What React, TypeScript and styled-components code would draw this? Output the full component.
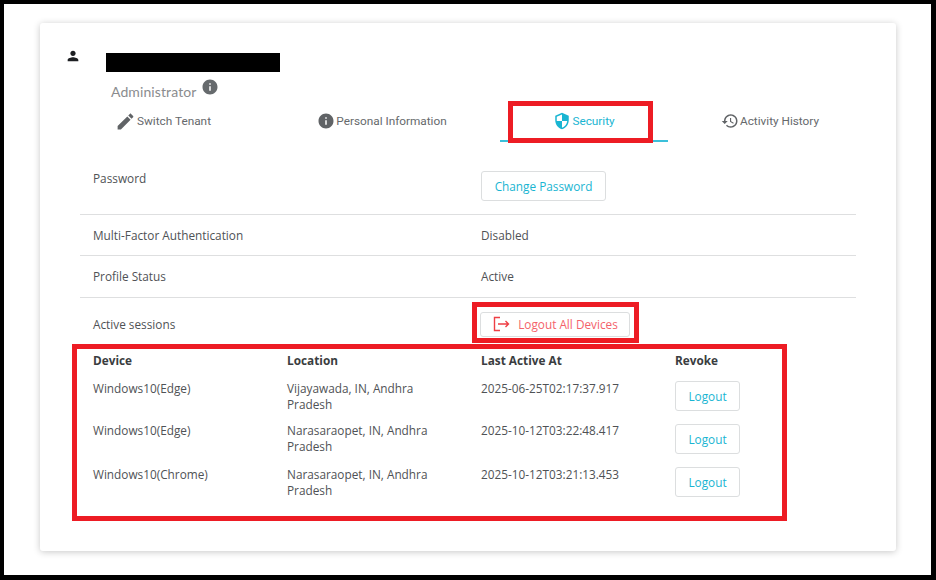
import React from "react";
import styled, { createGlobalStyle } from "styled-components";

const Global = createGlobalStyle`
  html, body { margin: 0; padding: 0; background: #fff; }
  body { font-family: "Open Sans", "Liberation Sans", sans-serif; color: #4f5255; }
  * { box-sizing: border-box; }
`;

const Frame = styled.div`
  width: 936px;
  height: 580px;
  border-style: solid;
  border-color: #000;
  border-width: 4px 5px 5px 4px;
  padding: 19px 35px 24px 36px;
  background: #fff;
  overflow: hidden;
`;

const Card = styled.section`
  height: 528px;
  background: #fff;
  border-radius: 3px;
  box-shadow: 0 1px 7px rgba(0, 0, 0, 0.22);
  padding: 0 24px 0 26px;
`;

const Header = styled.header`
  height: 85px;
  display: flex;
  padding-top: 24px;
`;

const UserGlyph = styled.svg`
  width: 16px;
  height: 16px;
  margin-top: 1px;
  margin-left: -1px;
  fill: #1d1f22;
  flex: none;
`;

const Identity = styled.div`
  margin-left: 25px;
  display: flex;
  flex-direction: column;
`;

const Redaction = styled.div`
  width: 174px;
  height: 19px;
  margin-top: 6px;
  background: #000;
`;

const Role = styled.div`
  display: flex;
  margin: 11px 0 0 5px;
  font-family: Lato, "Open Sans", sans-serif;
  font-size: 14px;
  line-height: 18px;
  letter-spacing: 0.1px;
  color: #8a8c8e;
  position: relative;
`;

const RoleInfo = styled.svg`
  position: absolute;
  left: 90px;
  top: -5px;
  width: 18px;
  height: 18px;
  fill: #666a6d;
`;

const Tabs = styled.nav`
  display: flex;
  height: 34px;
`;

const Tab = styled.div<{ $width: number; $active?: boolean; $inset?: number }>`
  position: relative;
  width: ${(p) => p.$width}px;
  height: 34px;
  display: flex;
  justify-content: center;
  align-items: flex-start;
  gap: 1px;
  padding: 4px 0 0 ${(p) => p.$inset ?? 0}px;
  font-family: Roboto, "Liberation Sans", sans-serif;
  font-size: 11.8px;
  line-height: 18px;
  color: ${(p) => (p.$active ? "#19b5d2" : "#66696c")};
  border-bottom: 2px solid ${(p) => (p.$active ? "#3cc0da" : "transparent")};
`;

const TabGlyph = styled.svg<{ $active?: boolean; $large?: boolean }>`
  width: ${(p) => (p.$large ? 21 : 18)}px;
  height: ${(p) => (p.$large ? 21 : 18)}px;
  margin-top: ${(p) => (p.$large ? -1.5 : 0)}px;
  flex: none;
  fill: ${(p) => (p.$active ? "#19b5d2" : "#606366")};
`;

const Highlight = styled.span<{ $top: number; $right: number; $bottom: number; $left: number }>`
  position: absolute;
  top: ${(p) => p.$top}px;
  right: ${(p) => p.$right}px;
  bottom: ${(p) => p.$bottom}px;
  left: ${(p) => p.$left}px;
  border: 5px solid #ed1c24;
  pointer-events: none;
`;

const Rows = styled.div`
  margin: 15px 16px 0 14px;
  font-size: 11.8px;
  line-height: 16px;
`;

const Row = styled.div<{ $height: number; $top: number; $last?: boolean }>`
  display: grid;
  grid-template-columns: repeat(2, 388px);
  height: ${(p) => p.$height}px;
  padding-top: ${(p) => p.$top}px;
  border-bottom: ${(p) => (p.$last ? "none" : "1px solid #dedfe0")};
`;

const Cell = styled.div`
  padding-left: 13px;
`;

const ActionCell = styled.div<{ $offset: number }>`
  padding-left: 13px;
  margin-top: ${(p) => p.$offset}px;
`;

const OutlineButton = styled.button<{ $danger?: boolean }>`
  position: relative;
  display: inline-flex;
  align-items: center;
  justify-content: center;
  background: #fff;
  border: 1px solid #dcdedf;
  border-radius: 3px;
  font-family: "Open Sans", "Liberation Sans", sans-serif;
  font-size: 11.8px;
  line-height: 16px;
  padding: 0 0 1px;
  color: ${(p) => (p.$danger ? "#f4626a" : "#19b5d2")};
`;

const ChangeButton = styled(OutlineButton)`
  width: 125px;
  height: 30px;
`;

const LogoutAllButton = styled(OutlineButton)`
  width: 150px;
  height: 25px;
  margin-left: -1px;
  gap: 8px;
`;

const LogoutGlyph = styled.svg`
  width: 18px;
  height: 18px;
  fill: none;
  stroke: #ee3f45;
  stroke-width: 1.4;
`;

const SessionsWrap = styled.div`
  position: relative;
  margin: 3px 16px 0 14px;
  font-size: 11.8px;
  line-height: 16px;
`;

const SessionsGrid = styled.div`
  display: grid;
  grid-template-columns: repeat(4, 194px);
`;

const HeadCell = styled.div`
  padding: 0 0 0 13px;
  height: 21px;
  font-weight: 700;
  color: #3a3d40;
`;

const SessionCell = styled.div<{ $height: number }>`
  padding: 7px 13px 0;
  height: ${(p) => p.$height}px;
`;

const LogoutButtonCell = styled.div<{ $height: number; $top: number }>`
  padding: ${(p) => p.$top}px 0 0 13px;
  height: ${(p) => p.$height}px;
`;

const LogoutButton = styled(OutlineButton)`
  width: 65px;
  height: 30px;
`;

const person = "M12 12c2.21 0 4-1.79 4-4s-1.79-4-4-4-4 1.79-4 4 1.79 4 4 4zm0 2c-2.67 0-8 1.34-8 4v2h16v-2c0-2.66-5.33-4-8-4z";
const edit = "M3 17.25V21h3.75L17.81 9.94l-3.75-3.75L3 17.25zM20.71 7.04c.39-.39.39-1.02 0-1.41l-2.34-2.34c-.39-.39-1.02-.39-1.41 0l-1.83 1.83 3.75 3.75 1.83-1.83z";
const info = "M12 2C6.48 2 2 6.48 2 12s4.48 10 10 10 10-4.48 10-10S17.52 2 12 2zm1 15h-2v-6h2v6zm0-8h-2V7h2v2z";
const shield = "M12 1L3 5v6c0 5.55 3.84 10.74 9 12 5.16-1.26 9-6.45 9-12V5l-9-4zm0 10.99h7c-.53 4.12-3.28 7.79-7 8.94V12H5V6.3l7-3.11v8.8z";
const history = "M13 3c-4.97 0-9 4.03-9 9H1l3.89 3.89.07.14L9 12H6c0-3.87 3.13-7 7-7s7 3.13 7 7-3.13 7-7 7c-1.93 0-3.68-.79-4.94-2.06l-1.42 1.42C8.27 19.99 10.51 21 13 21c4.97 0 9-4.03 9-9s-4.03-9-9-9zm-1 5v5l4.28 2.54.72-1.21-3.5-2.08V8H12z";

const sessions = [
  { device: "Windows10(Edge)", location: "Vijayawada, IN, Andhra Pradesh", at: "2025-06-25T02:17:37.917", height: 42, buttonTop: 8 },
  { device: "Windows10(Edge)", location: "Narasaraopet, IN, Andhra Pradesh", at: "2025-10-12T03:22:48.417", height: 44, buttonTop: 9 },
  { device: "Windows10(Chrome)", location: "Narasaraopet, IN, Andhra Pradesh", at: "2025-10-12T03:21:13.453", height: 44, buttonTop: 8 },
];

export default function App() {
  return (
    <>
      <Global />
      <Frame>
        <Card>
          <Header>
            <UserGlyph viewBox="0 0 24 24"><path d={person} /></UserGlyph>
            <Identity>
              <Redaction />
              <Role>
                Administrator
                <RoleInfo viewBox="0 0 24 24"><path d={info} /></RoleInfo>
              </Role>
            </Identity>
          </Header>
          <Tabs>
            <Tab $width={194}>
              <TabGlyph $large viewBox="0 0 24 24"><path d={edit} /></TabGlyph>
              Switch Tenant
            </Tab>
            <Tab $width={240} $inset={4}>
              <TabGlyph viewBox="0 0 24 24"><path d={info} /></TabGlyph>
              Personal Information
            </Tab>
            <Tab $width={168} $active>
              <TabGlyph $active viewBox="0 0 24 24"><path d={shield} /></TabGlyph>
              Security
              <Highlight $top={-7} $right={15} $bottom={-3} $left={8} />
            </Tab>
            <Tab $width={204}>
              <TabGlyph viewBox="0 0 24 24"><path d={history} /></TabGlyph>
              Activity History
            </Tab>
          </Tabs>
          <Rows>
            <Row $height={58} $top={13}>
              <Cell>Password</Cell>
              <ActionCell $offset={1}><ChangeButton>Change Password</ChangeButton></ActionCell>
            </Row>
            <Row $height={41} $top={12}>
              <Cell>Multi-Factor Authentication</Cell>
              <Cell>Disabled</Cell>
            </Row>
            <Row $height={42} $top={12}>
              <Cell>Profile Status</Cell>
              <Cell>Active</Cell>
            </Row>
            <Row $height={51} $top={18} $last>
              <Cell>Active sessions</Cell>
              <ActionCell $offset={-4}>
                <LogoutAllButton $danger>
                  <LogoutGlyph viewBox="0 0 18 18">
                    <path d="M8 2.5H2.5v13H8" />
                    <path d="M6 9h10.5M13.5 6l3 3-3 3" />
                  </LogoutGlyph>
                  Logout All Devices
                  <Highlight $top={-11} $right={-10} $bottom={-7} $left={-9} />
                </LogoutAllButton>
              </ActionCell>
            </Row>
          </Rows>
          <SessionsWrap>
            <SessionsGrid>
              <HeadCell>Device</HeadCell>
              <HeadCell>Location</HeadCell>
              <HeadCell>Last Active At</HeadCell>
              <HeadCell>Revoke</HeadCell>
              {sessions.map((s, i) => (
                <React.Fragment key={i}>
                  <SessionCell $height={s.height}>{s.device}</SessionCell>
                  <SessionCell $height={s.height}>{s.location}</SessionCell>
                  <SessionCell $height={s.height}>{s.at}</SessionCell>
                  <LogoutButtonCell $height={s.height} $top={s.buttonTop}><LogoutButton>Logout</LogoutButton></LogoutButtonCell>
                </React.Fragment>
              ))}
            </SessionsGrid>
            <Highlight $top={-8} $right={69} $bottom={-18} $left={-8} />
          </SessionsWrap>
        </Card>
      </Frame>
    </>
  );
}
